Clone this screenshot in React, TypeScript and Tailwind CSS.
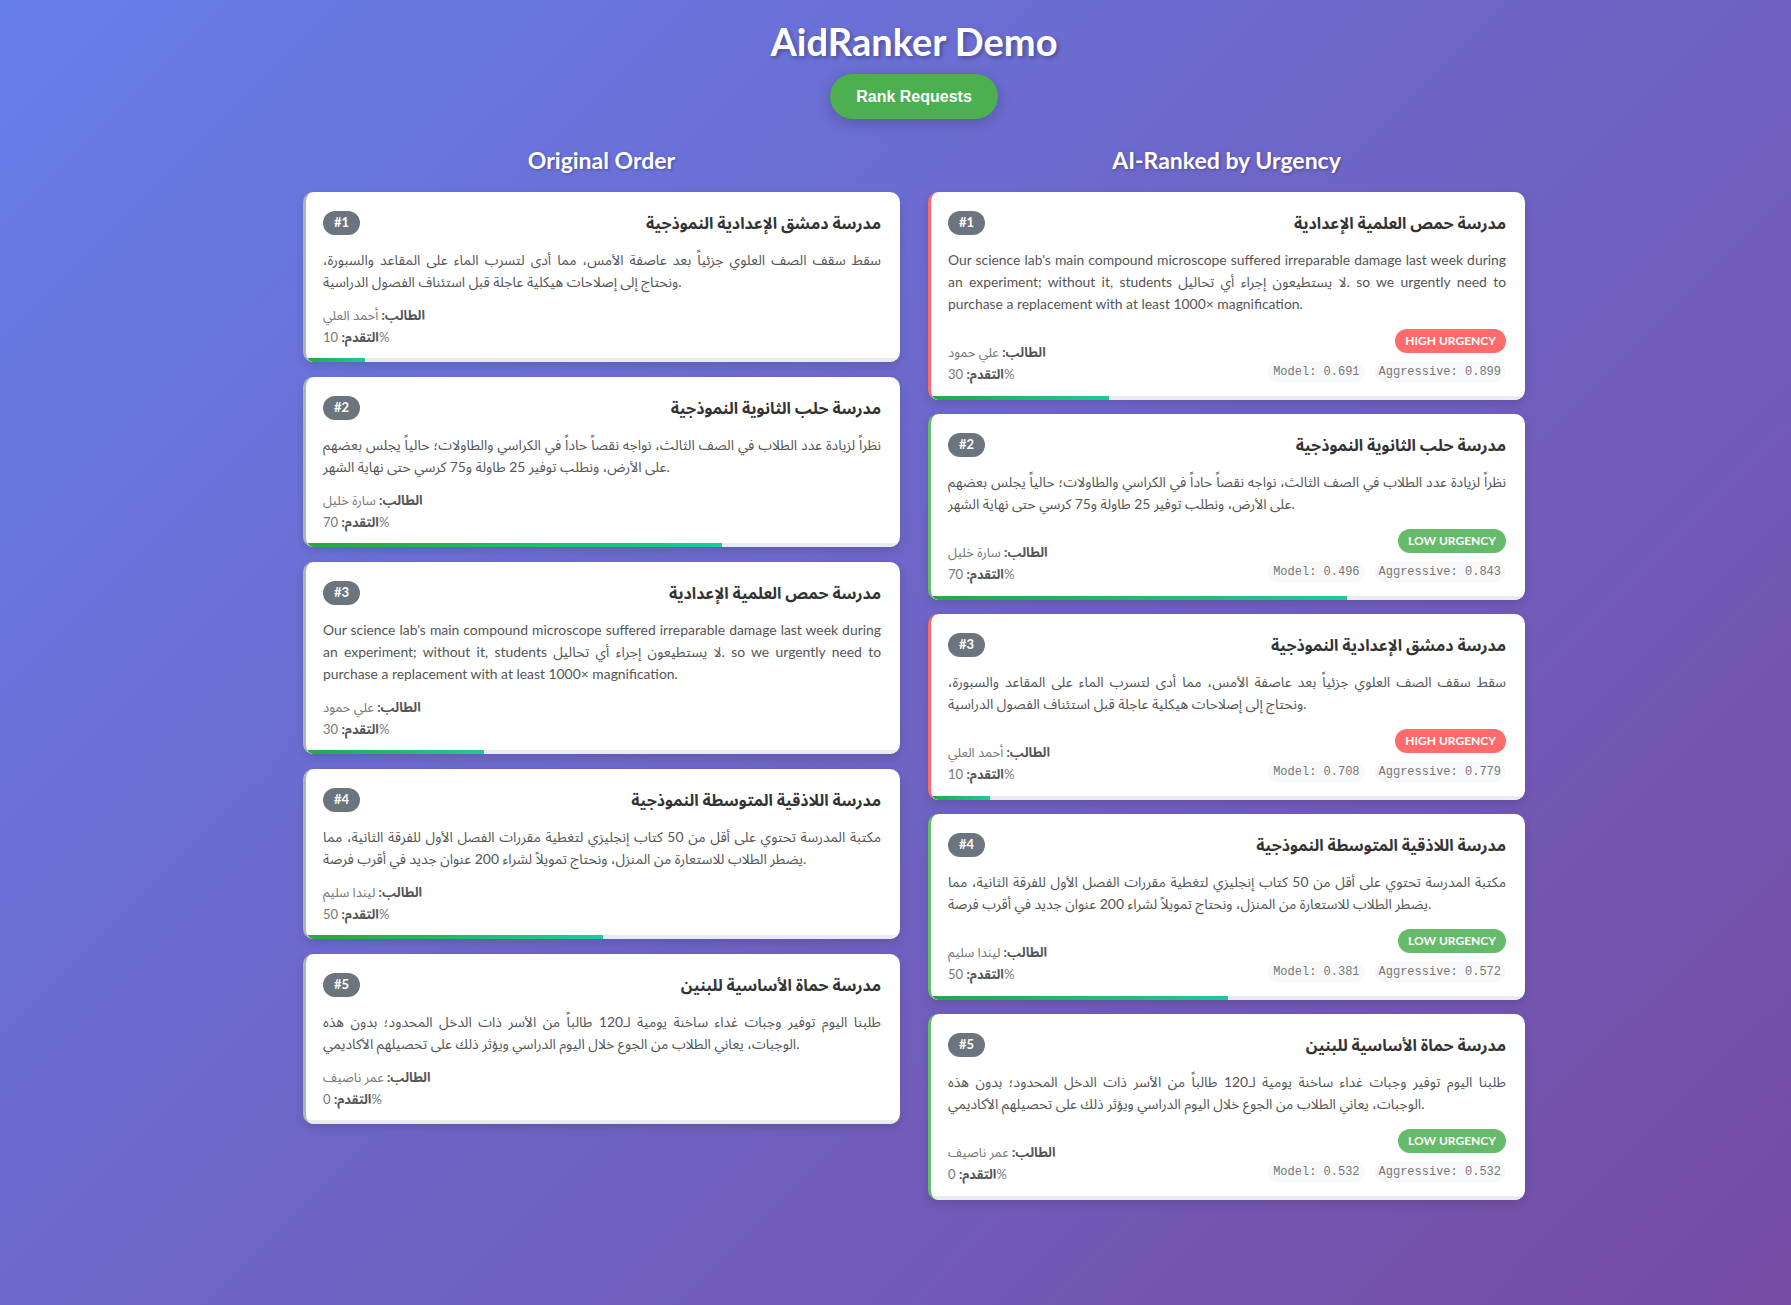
import React from "react";

type Item = { school: string; desc: string; student: string; progress: number };

const items: Record<string, Item> = {
  damascus: {
    school: "مدرسة دمشق الإعدادية النموذجية",
    desc: "سقط سقف الصف العلوي جزئياً بعد عاصفة الأمس، مما أدى لتسرب الماء على المقاعد والسبورة، ونحتاج إلى إصلاحات هيكلية عاجلة قبل استئناف الفصول الدراسية.",
    student: "أحمد العلي",
    progress: 10,
  },
  aleppo: {
    school: "مدرسة حلب الثانوية النموذجية",
    desc: "نظراً لزيادة عدد الطلاب في الصف الثالث، نواجه نقصاً حاداً في الكراسي والطاولات؛ حالياً يجلس بعضهم على الأرض، ونطلب توفير 25 طاولة و75 كرسي حتى نهاية الشهر.",
    student: "سارة خليل",
    progress: 70,
  },
  homs: {
    school: "مدرسة حمص العلمية الإعدادية",
    desc: "Our science lab's main compound microscope suffered irreparable damage last week during an experiment; without it, students لا يستطيعون إجراء أي تحاليل. so we urgently need to purchase a replacement with at least 1000× magnification.",
    student: "علي حمود",
    progress: 30,
  },
  latakia: {
    school: "مدرسة اللاذقية المتوسطة النموذجية",
    desc: "مكتبة المدرسة تحتوي على أقل من 50 كتاب إنجليزي لتغطية مقررات الفصل الأول للفرقة الثانية، مما يضطر الطلاب للاستعارة من المنزل، ونحتاج تمويلاً لشراء 200 عنوان جديد في أقرب فرصة.",
    student: "ليندا سليم",
    progress: 50,
  },
  hama: {
    school: "مدرسة حماة الأساسية للبنين",
    desc: "طلبنا اليوم توفير وجبات غداء ساخنة يومية لـ120 طالباً من الأسر ذات الدخل المحدود؛ بدون هذه الوجبات، يعاني الطلاب من الجوع خلال اليوم الدراسي ويؤثر ذلك على تحصيلهم الأكاديمي.",
    student: "عمر ناصيف",
    progress: 0,
  },
};

const original = ["damascus", "aleppo", "homs", "latakia", "hama"];

const ranked: { key: string; high: boolean; model: string; aggressive: string }[] = [
  { key: "homs", high: true, model: "0.691", aggressive: "0.899" },
  { key: "aleppo", high: false, model: "0.496", aggressive: "0.843" },
  { key: "damascus", high: true, model: "0.708", aggressive: "0.779" },
  { key: "latakia", high: false, model: "0.381", aggressive: "0.572" },
  { key: "hama", high: false, model: "0.532", aggressive: "0.532" },
];

function Meta({ item }: { item: Item }) {
  return (
    <div className="text-[13px] leading-[22px] text-[#777]">
      <div>
        <strong className="font-bold text-[#555]">الطالب:</strong> {item.student}
      </div>
      <div>
        <strong className="font-bold text-[#555]">التقدم:</strong> {item.progress}%
      </div>
    </div>
  );
}

function Card({
  rank,
  item,
  rankInfo,
}: {
  rank: number;
  item: Item;
  rankInfo?: { high: boolean; model: string; aggressive: string };
}) {
  const borderColor = rankInfo
    ? rankInfo.high
      ? "border-[#ff6b6b]"
      : "border-[#66bb6a]"
    : "border-[#adb5bd]";
  return (
    <div
      className={`flex flex-col overflow-hidden rounded-[10px] border-l-[3px] bg-white shadow-[0_4px_8px_rgba(0,0,0,0.12)] ${borderColor}`}
    >
      <div className={`pl-[17px] pr-[19px] pt-[18px] ${rankInfo ? "pb-[11px]" : "pb-[10px]"}`}>
        <div className="flex h-[25px] items-center justify-between">
          <span className="flex h-[24px] items-center rounded-full bg-[#6c757d] px-[11px] text-[13px] font-bold text-white">
            #{rank}
          </span>
          <h3 className="text-[16px] font-bold text-[#333]">{item.school}</h3>
        </div>
        <p className="mt-[14px] text-justify text-[13.9px] leading-[22px] text-[#555]">{item.desc}</p>
        {rankInfo ? (
          <div className="mt-[14px] flex items-end justify-between">
            <Meta item={item} />
            <div className="mb-[3px] flex flex-col items-end gap-[9px]">
              <span
                className={`flex h-[24px] items-center rounded-full px-[10px] text-[12px] font-bold uppercase text-white ${
                  rankInfo.high ? "bg-[#ff6b6b]" : "bg-[#66bb6a]"
                }`}
              >
                {rankInfo.high ? "High Urgency" : "Low Urgency"}
              </span>
              <div className="flex gap-[9px] font-['Liberation_Mono',monospace] text-[12px] text-[#777]">
                <span className="flex h-[20px] items-center rounded-[10px] bg-[#f8f9fa] px-[5px]">
                  Model: {rankInfo.model}
                </span>
                <span className="flex h-[20px] items-center rounded-[10px] bg-[#f8f9fa] px-[5px]">
                  Aggressive: {rankInfo.aggressive}
                </span>
              </div>
            </div>
          </div>
        ) : (
          <div className="mt-[11px]">
            <Meta item={item} />
          </div>
        )}
      </div>
      <div className="h-[4px] w-full bg-[#e9ecef]">
        <div
          className="h-full bg-[linear-gradient(90deg,#28a745,#20c997)]"
          style={{ width: `${item.progress}%` }}
        />
      </div>
    </div>
  );
}

export default function App() {
  return (
    <div className="min-h-screen bg-[linear-gradient(135deg,#667eea_0%,#764ba2_100%)] pb-[40px] pl-[37px] pt-[18px] font-['Lato','Noto_Sans_Arabic',sans-serif]">
      <div className="mx-auto w-[1222px]">
        <h1 className="text-center text-[38px] font-bold leading-[46px] text-white [text-shadow:2px_2px_4px_rgba(0,0,0,0.3)]">
          AidRanker Demo
        </h1>
        <div className="mt-[10px] flex justify-center">
          <button className="h-[45px] w-[168px] rounded-full bg-[#4caf50] font-['Liberation_Sans',sans-serif] text-[16px] font-bold text-white shadow-[0_4px_15px_rgba(0,0,0,0.2)]">
            Rank Requests
          </button>
        </div>
        <div className="mt-[27px] grid grid-cols-2 gap-[28px]">
          <div>
            <h2 className="text-center text-[23px] font-bold leading-[28px] text-white [text-shadow:1px_1px_3px_rgba(0,0,0,0.3)]">
              Original Order
            </h2>
            <div className="mt-[18px] flex flex-col gap-[15px]">
              {original.map((k, i) => (
                <Card key={k} rank={i + 1} item={items[k]} />
              ))}
            </div>
          </div>
          <div>
            <h2 className="text-center text-[23px] font-bold leading-[28px] text-white [text-shadow:1px_1px_3px_rgba(0,0,0,0.3)]">
              AI-Ranked by Urgency
            </h2>
            <div className="mt-[18px] flex flex-col gap-[14px]">
              {ranked.map((r, i) => (
                <Card key={r.key} rank={i + 1} item={items[r.key]} rankInfo={r} />
              ))}
            </div>
          </div>
        </div>
      </div>
    </div>
  );
}
